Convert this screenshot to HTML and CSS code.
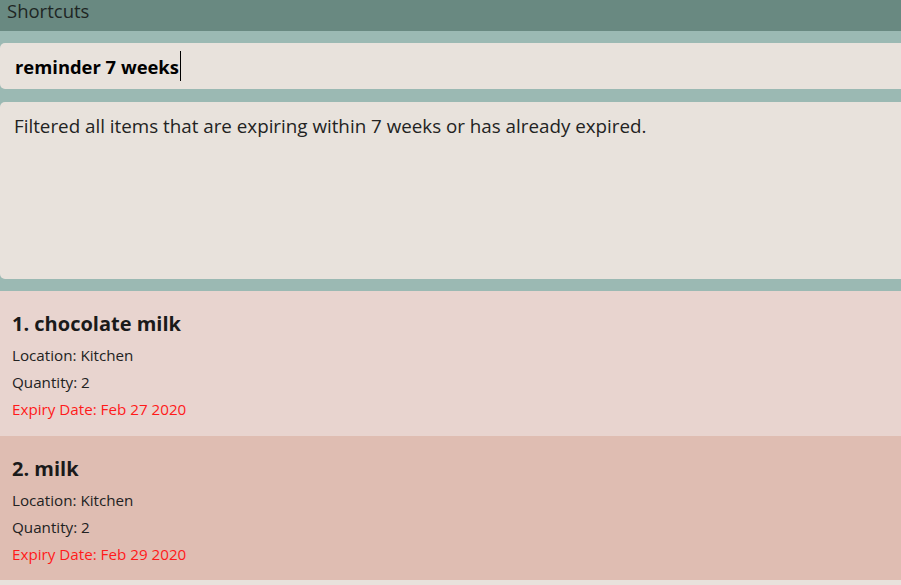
FILE: index.html
```html
<!DOCTYPE html>
<html>
<head>
<meta charset="utf-8">
<link rel="stylesheet" href="styles.css">
</head>
<body>
<div class="app">
  <div class="menubar"><span class="menu-title">Shortcuts</span></div>
  <div class="main">
    <div class="command"><span class="command-text">reminder 7 weeks</span><span class="caret"></span></div>
    <div class="result">Filtered all items that are expiring within 7 weeks or has already expired.</div>
  </div>
  <div class="list">
    <div class="card card-odd">
      <div class="card-title">1. chocolate milk</div>
      <div class="card-line">Location: Kitchen</div>
      <div class="card-line">Quantity: 2</div>
      <div class="card-line expiry">Expiry Date: Feb 27 2020</div>
    </div>
    <div class="card card-even">
      <div class="card-title">2. milk</div>
      <div class="card-line">Location: Kitchen</div>
      <div class="card-line">Quantity: 2</div>
      <div class="card-line expiry">Expiry Date: Feb 29 2020</div>
    </div>
  </div>
</div>
</body>
</html>
```

FILE: styles.css
```css
html, body {
  margin: 0;
  padding: 0;
}
body {
  width: 901px;
  height: 585px;
  overflow: hidden;
  background: #e8e2dc;
  font-family: "Open Sans", "Noto Sans", sans-serif;
  color: #1a1a1a;
}
.app {
  display: flex;
  flex-direction: column;
}
.menubar {
  height: 31px;
  box-sizing: border-box;
  background: #698981;
  display: flex;
  align-items: flex-start;
  padding: 0 0 0 7px;
}
.menu-title {
  font-size: 18.5px;
  line-height: 21px;
  color: #1e2624;
}
.main {
  background: #9bb9b3;
  padding: 12px 0 12px 0;
  display: flex;
  flex-direction: column;
  gap: 13px;
}
.command {
  height: 46px;
  background: #e8e2dc;
  border-radius: 5px 0 0 5px;
  display: flex;
  align-items: center;
  padding-left: 15px;
}
.command-text {
  font-weight: 700;
  font-size: 18.4px;
  color: #000;
}
.caret {
  width: 1px;
  height: 30px;
  background: #000;
  margin-left: 1px;
}
.result {
  height: 177px;
  box-sizing: border-box;
  background: #e8e2dc;
  border-radius: 5px 0 0 5px;
  padding: 11px 14px;
  font-size: 18.8px;
  color: #222;
}
.list {
  display: flex;
  flex-direction: column;
}
.card {
  height: 145px;
  box-sizing: border-box;
  padding: 18px 12px 0 12px;
  display: flex;
  flex-direction: column;
}
.card-odd {
  background: #e8d4cf;
}
.card-even {
  background: #dfbdb2;
  height: 144px;
}
.card-title {
  font-weight: 700;
  font-size: 20px;
  color: #1a1a1a;
  line-height: 29px;
  margin-bottom: 4px;
}
.card-line {
  font-size: 15.2px;
  line-height: 27px;
  color: #222;
}
.expiry {
  color: #ff1a1a;
}
```
